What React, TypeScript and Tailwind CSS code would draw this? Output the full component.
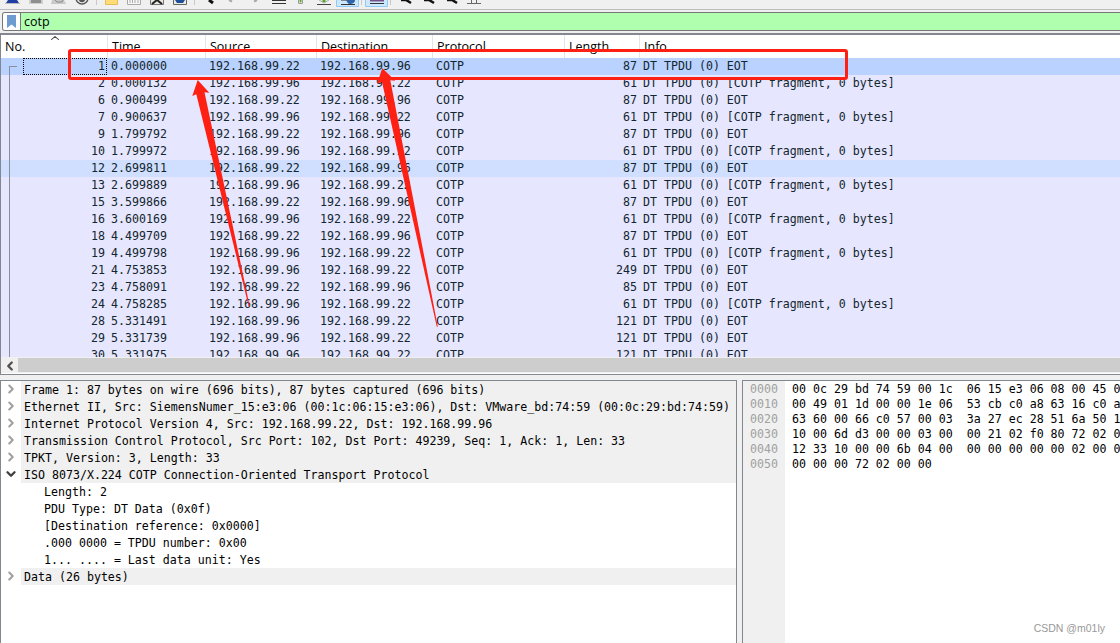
import { ChevronDown, ChevronLeft, ChevronRight, ChevronUp } from 'lucide-react';
import clsx from 'clsx';

const A = '192.168.99.22';
const B = '192.168.99.96';
const EOT = 'DT TPDU (0) EOT';
const FRAG = 'DT TPDU (0) [COTP fragment, 0 bytes]';

// no, time, source, destination, length, info
const packets: [number, string, string, string, number, string][] = [
  [1, '0.000000', A, B, 87, EOT],
  [2, '0.000132', B, A, 61, FRAG],
  [6, '0.900499', A, B, 87, EOT],
  [7, '0.900637', B, A, 61, FRAG],
  [9, '1.799792', A, B, 87, EOT],
  [10, '1.799972', B, A, 61, FRAG],
  [12, '2.699811', A, B, 87, EOT],
  [13, '2.699889', B, A, 61, FRAG],
  [15, '3.599866', A, B, 87, EOT],
  [16, '3.600169', B, A, 61, FRAG],
  [18, '4.499709', A, B, 87, EOT],
  [19, '4.499798', B, A, 61, FRAG],
  [21, '4.753853', B, A, 249, EOT],
  [23, '4.758091', A, B, 85, EOT],
  [24, '4.758285', B, A, 61, FRAG],
  [28, '5.331491', B, A, 121, EOT],
  [29, '5.331739', B, A, 121, EOT],
  [30, '5.331975', B, A, 121, EOT],
];

const columns = ['Time', 'Source', 'Destination', 'Protocol', 'Length', 'Info'];

const details = [
  { text: 'Frame 1: 87 bytes on wire (696 bits), 87 bytes captured (696 bits)' },
  { text: 'Ethernet II, Src: SiemensNumer_15:e3:06 (00:1c:06:15:e3:06), Dst: VMware_bd:74:59 (00:0c:29:bd:74:59)' },
  { text: 'Internet Protocol Version 4, Src: 192.168.99.22, Dst: 192.168.99.96' },
  { text: 'Transmission Control Protocol, Src Port: 102, Dst Port: 49239, Seq: 1, Ack: 1, Len: 33' },
  { text: 'TPKT, Version: 3, Length: 33' },
  { text: 'ISO 8073/X.224 COTP Connection-Oriented Transport Protocol', open: true },
  { text: 'Length: 2', child: true },
  { text: 'PDU Type: DT Data (0x0f)', child: true },
  { text: '[Destination reference: 0x0000]', child: true },
  { text: '.000 0000 = TPDU number: 0x00', child: true },
  { text: '1... .... = Last data unit: Yes', child: true },
  { text: 'Data (26 bytes)' },
];

const hex = [
  ['0000', '00 0c 29 bd 74 59 00 1c  06 15 e3 06 08 00 45 00'],
  ['0010', '00 49 01 1d 00 00 1e 06  53 cb c0 a8 63 16 c0 a8'],
  ['0020', '63 60 00 66 c0 57 00 03  3a 27 ec 28 51 6a 50 18'],
  ['0030', '10 00 6d d3 00 00 03 00  00 21 02 f0 80 72 02 00'],
  ['0040', '12 33 10 00 00 6b 04 00  00 00 00 00 00 02 00 00'],
  ['0050', '00 00 00 72 02 00 00'],
];

const grid = 'grid grid-cols-[107px_98px_111px_116px_132px_75px_1fr]';
const mono = "font-['DejaVu_Sans_Mono',monospace] text-[11.627px]";

function Toolbar() {
  return (
    <svg className="block h-[9px] w-full shrink-0" viewBox="0 0 1120 9" preserveAspectRatio="xMinYMin">
      {/* capture controls */}
      <path d="M8 0h9l2 3H6z" fill="#1f3da5" />
      <path d="M5 3h15v1H5z" fill="#b9b9b9" />
      <path d="M29 0h14v4H29z" fill="#cecece" />
      <path d="M31 0h10v3H31z" fill="#8e8e8e" />
      <path d="M52 0h12l2 4H51z" fill="#c8c8c8" />
      <path d="M55 0l2 2h5l1-2" stroke="#8b8b8b" fill="none" />
      <circle cx="82" cy="-2" r="6" fill="#e8e8e8" stroke="#555" strokeWidth="1.4" />
      <circle cx="82" cy="-1" r="3.2" fill="#555" />
      <path d="M96.5 0v5M194.5 0v5M361.5 0v5M390.5 0v5" stroke="#c9c9c9" />
      {/* file actions */}
      <path d="M105.5 0v4.5h12V0" fill="#ffdc76" stroke="#e5bd53" />
      <path d="M127.5 0v4.5h13V0" fill="#f7f7f7" stroke="#a8a8a8" />
      <path d="M130 0v3M132.5 0v3M135 0v3M138 0v3" stroke="#aaa" />
      <path d="M150.5 0v4.5h13V0" fill="#e9e9df" stroke="#777" />
      <path d="M152 4l5-4 5 4" stroke="#222" strokeWidth="2" fill="none" />
      <path d="M173.5 0v4.5h13V0" fill="#e9eee0" stroke="#666" />
      <path d="M175 0h10l-2 3h-6z" fill="#1f4f9b" />
      {/* navigation */}
      <path d="M209 0l4 3" stroke="#111" strokeWidth="3" />
      <path d="M229 0l3 1.5M257 0l-3 1.5" stroke="#aaa" strokeWidth="2" />
      <path d="M272 .5h14M272 3.5h14" stroke="#333" />
      <path d="M298.500 0v3.500h4V0" fill="#fff" stroke="#999" />
      <path d="M299.500 0h2v2.500h-2z" fill="#55a62c" />
      <path d="M317 4.500h14" stroke="#444" />
      <path d="M319 0l5 3 5-3" fill="#e5eddf" stroke="#aaa" />
      <path d="M322.500 0h3v2h-3z" fill="#55a62c" />
      <path d="M336.500 0v6.500h22V0M365.500 0v6.500h22V0" fill="#cce8ff" stroke="#91c9f7" />
      <path d="M341 4.500h14" stroke="#333" />
      <path d="M341 .5h6" stroke="#888" />
      <path d="M346 0h9c0 3-3 4-5 4s-2-1-4-4z" fill="#2f64a9" />
      <path d="M370 .5h14" stroke="#765087" strokeWidth="2" />
      <path d="M370 3.500h14" stroke="#333" />
      {/* zoom */}
      <path d="M401 0h5l5 3M424 0h5l5 3M447 0h5l5 3" stroke="#111" strokeWidth="2.600" fill="none" />
      <path d="M467 3.500h14M471.500 0v3M476.500 0v3" stroke="#666" />
    </svg>
  );
}

function PacketList() {
  return (
    <div className="flex h-[342px] shrink-0 flex-col border-t-2 border-b border-l border-[#828790] bg-white">
      <div className={clsx(grid, "relative h-[23px] shrink-0 font-['Open_Sans',sans-serif] text-[12.5px] leading-[23px]")}>
        <div className="border-r border-[#e5e5e5] pl-1">No.</div>
        {columns.map((c) => (
          <div key={c} className={clsx('pl-1', c !== 'Info' && 'border-r border-[#e5e5e5]')}>
            {c}
          </div>
        ))}
        <ChevronUp className="absolute -top-[3px] left-[47px] h-3 w-3.5 text-[#444]" strokeWidth={2} preserveAspectRatio="none" />
      </div>
      <div className="relative h-[299px] overflow-hidden text-[#12272e]">
        {packets.map(([no, time, src, dst, len, info]) => (
          <div
            key={no}
            className={clsx(
              grid,
              mono,
              'h-[17px] leading-[17px] whitespace-pre',
              no === 1 ? 'bg-[#bad2ff]' : no === 12 ? 'bg-[#d0dfff]' : 'bg-[#e6e6ff]',
            )}
          >
            <div className={clsx('mr-px ml-[22px] pr-[2px] text-right', no === 1 && 'outline-1 -outline-offset-1 outline-dotted outline-black')}>
              {no}
            </div>
            <div className="pl-[3px]">{time}</div>
            <div className="pl-[3px]">{src}</div>
            <div className="pl-[3px]">{dst}</div>
            <div className="pl-[3px]">COTP</div>
            <div className="pr-[3px] text-right">{len}</div>
            <div className="pl-[3px]">{info}</div>
          </div>
        ))}
        {/* conversation bracket */}
        <div className="absolute top-2 left-2 h-[300px] w-2 border-t border-l border-[#8a8d9b]" />
      </div>
      <div className="flex h-[16px] shrink-0 bg-[#f0f0f0] pt-px">
        <div className="flex w-[17px] items-center justify-center">
          <ChevronLeft className="h-3.5 w-3.5 text-[#505050]" strokeWidth={4} />
        </div>
        <div className="h-[14px] flex-1 bg-[#cdcdcd]" />
      </div>
    </div>
  );
}

function DetailTree() {
  return (
    <div className="w-[737px] border border-b-0 border-[#828790] bg-white">
      {details.map(({ text, open, child }) => (
        <div key={text} className={clsx(mono, 'flex h-[17px] leading-[19px] whitespace-pre')}>
          <div className="flex w-5 shrink-0 items-center justify-center">
            {open && <ChevronDown className="mb-px h-3.5 w-3.5 text-[#404040]" strokeWidth={4} />}
            {!open && !child && <ChevronRight className="mb-px h-3.5 w-3.5 text-[#a0a0a0]" strokeWidth={3.5} />}
          </div>
          <div className={clsx('flex-1', child ? 'pl-[23px]' : 'bg-[#f0f0f0] pl-[3px]')}>{text}</div>
        </div>
      ))}
    </div>
  );
}

function HexView() {
  return (
    <div className={clsx(mono, 'ml-[5px] flex min-w-0 flex-1 overflow-hidden border-t border-l border-[#828790] bg-white leading-[15px] whitespace-pre')}>
      <div className="w-[42px] shrink-0 bg-[#f0f0f0] pt-px pl-[7px] text-[#a0a0a0]">
        {hex.map(([offset]) => (
          <div key={offset}>{offset}</div>
        ))}
      </div>
      <div className="pt-px pl-[7px]">
        {hex.map(([offset, bytes]) => (
          <div key={offset}>{bytes}</div>
        ))}
      </div>
    </div>
  );
}

export default function App() {
  return (
    <div className="relative flex h-[643px] w-[1120px] flex-col overflow-hidden bg-[#f0f0f0] text-black">
      <Toolbar />
      <div className="h-[3px] shrink-0 border-t border-[#bcbcbc]" />
      <div className="ml-[2px] flex h-[19px] shrink-0 rounded-l-[3px] border border-r-0 border-[#777] bg-[#afffaf]">
        <div className="flex w-[18px] items-center justify-center rounded-l-[2px] border-r border-[#777] bg-white">
          <svg className="h-[13px] w-[9px]" viewBox="0 0 9 13">
            <path d="M0 0h9v13L4.5 9.5 0 13z" fill="#6e9bd0" />
          </svg>
        </div>
        <span className="pl-[3px] font-['Open_Sans',sans-serif] text-[12.5px] leading-[18px]">cotp</span>
      </div>
      <div className="h-[2px] shrink-0" />
      <PacketList />
      <div className="mt-[5px] flex min-h-0 flex-1">
        <DetailTree />
        <HexView />
      </div>

      {/* highlight box and arrows drawn over the capture */}
      <svg className="pointer-events-none absolute inset-0 h-[643px] w-[1120px]" viewBox="0 0 1120 643" fill="#ff2014">
        <rect x="69.5" y="50.5" width="777" height="28" rx="1.5" fill="none" stroke="#ff2014" strokeWidth="3" />
        <path d="M197.7 80L192.3 96L196.3 94.3L248.8 306.7H249.8L204.5 92.3L209.3 92.7Z" />
        <path d="M382.3 68.3L377 83.5L382 82L436.8 326.7H437.8L390.3 80.3L395.3 80.7Z" />
      </svg>
      <span className="absolute right-[15px] bottom-[7px] font-['Liberation_Sans',sans-serif] text-[10.5px] leading-4 text-[#999]">
        CSDN @m01ly
      </span>
    </div>
  );
}
